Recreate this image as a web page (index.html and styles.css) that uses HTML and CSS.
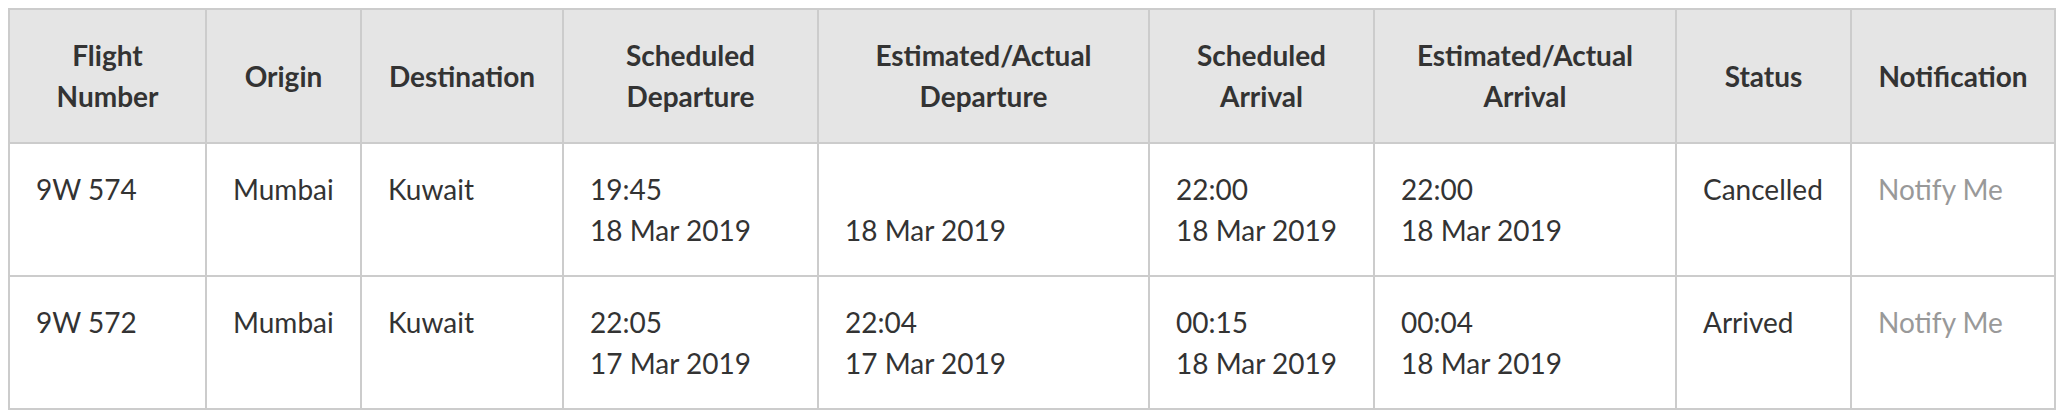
FILE: index.html
```html
<!DOCTYPE html>
<html lang="en">
<head>
<meta charset="utf-8">
<title>Flight Status</title>
<link rel="stylesheet" href="styles.css">
</head>
<body>
<table class="flights">
  <colgroup>
    <col class="c1"><col class="c2"><col class="c3"><col class="c4"><col class="c5"><col class="c6"><col class="c7"><col class="c8"><col class="c9">
  </colgroup>
  <thead>
    <tr>
      <th>Flight<br>Number</th>
      <th>Origin</th>
      <th>Destination</th>
      <th>Scheduled<br>Departure</th>
      <th>Estimated/Actual<br>Departure</th>
      <th>Scheduled<br>Arrival</th>
      <th>Estimated/Actual<br>Arrival</th>
      <th>Status</th>
      <th>Notification</th>
    </tr>
  </thead>
  <tbody>
    <tr>
      <td>9W 574</td>
      <td>Mumbai</td>
      <td>Kuwait</td>
      <td>19:45<br>18 Mar 2019</td>
      <td><br>18 Mar 2019</td>
      <td>22:00<br>18 Mar 2019</td>
      <td>22:00<br>18 Mar 2019</td>
      <td>Cancelled</td>
      <td class="notify">Notify Me</td>
    </tr>
    <tr>
      <td>9W 572</td>
      <td>Mumbai</td>
      <td>Kuwait</td>
      <td>22:05<br>17 Mar 2019</td>
      <td>22:04<br>17 Mar 2019</td>
      <td>00:15<br>18 Mar 2019</td>
      <td>00:04<br>18 Mar 2019</td>
      <td>Arrived</td>
      <td class="notify">Notify Me</td>
    </tr>
  </tbody>
</table>
</body>
</html>
```
FILE: styles.css
```css
html, body {
  margin: 0;
  padding: 0;
  background: #ffffff;
}
body {
  padding: 8px 8px 0 8px;
  font-family: Lato, "Open Sans", "Liberation Sans", sans-serif;
  color: #333333;
}
.flights {
  border-collapse: collapse;
  table-layout: fixed;
  width: 2048px;
  font-size: 28px;
  line-height: 41px;
}
.c1 { width: 197px; }
.c2 { width: 155px; }
.c3 { width: 202px; }
.c4 { width: 255px; }
.c5 { width: 331px; }
.c6 { width: 225px; }
.c7 { width: 302px; }
.c8 { width: 175px; }
.c9 { width: 204px; }
.flights th,
.flights td {
  border: 2px solid #cccccc;
}
.flights th {
  padding: 25px 26px;
  background: #e5e5e5;
  font-weight: 700;
  text-align: center;
  vertical-align: middle;
  color: #333333;
}
.flights td {
  padding: 25px 26px 24px 26px;
  text-align: left;
  vertical-align: top;
  font-weight: 400;
}
.flights td.notify {
  color: #999999;
}
```
